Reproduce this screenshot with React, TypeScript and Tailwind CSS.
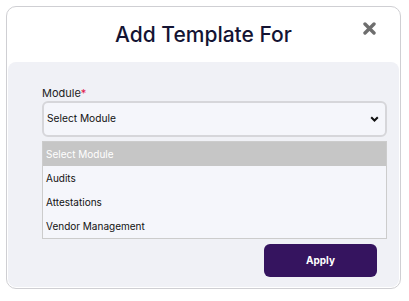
const options = ["Select Module", "Audits", "Attestations", "Vendor Management"];

export default function App() {
  return (
    <div className="w-[409px] h-[301px] bg-white pt-[6px] pl-[6px] font-['Inter',sans-serif]">
      <div className="w-[395px] h-[283px] flex flex-col rounded-[10px] border border-[#cfcfd3] bg-white">
        <div className="relative h-[55px] flex items-center justify-center">
          <h2 className="text-[21px] font-medium text-[#141433]">Add Template For</h2>
          <button className="absolute top-[15px] right-[24px]">
            <svg width="13" height="13" viewBox="0 0 13 13">
              <path d="M2 2 L11 11 M11 2 L2 11" stroke="#6e6e6e" strokeWidth="3.4" strokeLinecap="round" />
            </svg>
          </button>
        </div>
        <div className="flex-1 mx-px mb-px rounded-[8px] bg-[#f0f1f6] pt-[23px] pl-[34px] pr-[12px] pb-[10px] flex flex-col">
          <label className="text-[11px] leading-[16px] text-[#222]">
            Module<span className="text-[#e0174a]">*</span>
          </label>
          <div className="h-[36px] flex items-center justify-between rounded-[6px] border-2 border-[#d6d6da] bg-[#f5f6fb] pl-[3px] pr-[6px]">
            <span className="text-[10.2px] text-[#111]">Select Module</span>
            <svg width="9" height="6" viewBox="0 0 9 6">
              <path d="M1.2 1.2 L4.5 4.5 L7.8 1.2" fill="none" stroke="#111" strokeWidth="2" />
            </svg>
          </div>
          <ul className="mt-[4px] border border-[#cccccc] bg-[#f5f6fb]">
            {options.map((o, i) => (
              <li
                key={o}
                className={`h-[24px] flex items-center pl-[3px] text-[10px] ${i === 0 ? "bg-[#c6c6c6] text-white" : "text-[#111]"}`}
              >
                {o}
              </li>
            ))}
          </ul>
          <div className="flex justify-end pr-[10px] mt-[5px]">
            <button className="w-[113px] h-[33px] rounded-[6px] bg-[#35145f] text-white text-[10px] font-bold">
              Apply
            </button>
          </div>
        </div>
      </div>
    </div>
  );
}
